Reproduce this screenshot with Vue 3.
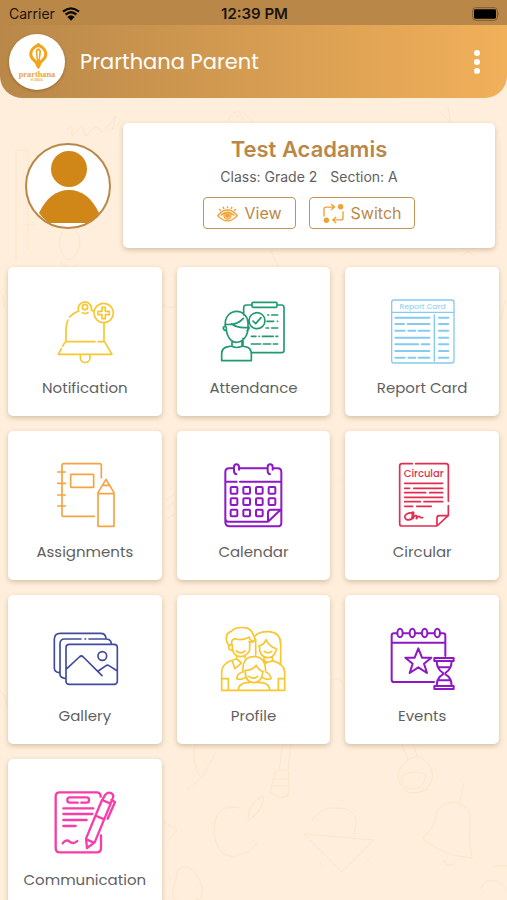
<template>
  <div class="app">
    <!-- Faint school doodles behind everything -->
    <svg class="doodles" viewBox="0 0 507 900" preserveAspectRatio="xMidYMin slice" aria-hidden="true">
      <path v-for="(d, i) in doodles" :key="i" :d="d" />
    </svg>

    <!-- Phone status bar -->
    <div class="status-bar">
      <div class="carrier">
        <span>Carrier</span>
        <svg class="wifi" viewBox="0 0 54 42" aria-hidden="true">
          <path d="M3 14Q27 -6 51 14" />
          <path d="M11 23Q27 9 43 23" />
          <path class="wifi-dot" d="M16 30Q27 20 38 30L27 41Z" />
        </svg>
      </div>
      <span class="time">12:39 PM</span>
      <svg class="battery" viewBox="0 0 84 42" aria-hidden="true">
        <rect class="battery-case" x="2" y="2" width="74" height="38" rx="9" />
        <rect x="6" y="7" width="66" height="28" rx="4" />
        <path class="battery-tip" d="M79 15q5 6 0 12z" />
      </svg>
    </div>

    <!-- Header with logo and menu -->
    <header class="header">
      <svg class="logo" viewBox="28 102 168 168" role="img" aria-label="Prarthana School">
        <path
          class="logo-mark"
          d="M116 128C121 134 143 141 143 162C143 182 125 184 122 200L116 207L110 200C107 184 89 182 89 162C89 141 111 134 116 128Z"
        />
        <path class="logo-hole" d="M116 141C127 145 134 153 134 162C134 171 127 176 120 182H112C105 176 98 171 98 162C98 153 105 145 116 141Z" />
        <path class="logo-mark" d="M116 145q8 2 8 11l-4 30h-8l-4-30q0-9 8-11z" />
        <path class="logo-hole" d="M116 151q3 1 3 5l-2 22h-2l-2-22q0-4 3-5z" />
        <text class="logo-name" x="112" y="230">prarthana</text>
        <text class="logo-sub" x="112" y="242">SCHOOL</text>
      </svg>
      <h1>Prarthana Parent</h1>
      <button class="menu-btn" type="button" aria-label="Menu">
        <svg viewBox="0 0 24 24" aria-hidden="true">
          <circle cx="12" cy="3" r="3" />
          <circle cx="12" cy="12" r="3" />
          <circle cx="12" cy="21" r="3" />
        </svg>
      </button>
    </header>

    <main class="content">
      <!-- Selected student -->
      <section class="student">
        <svg class="avatar" viewBox="0 0 86 86" aria-hidden="true">
          <circle class="avatar-ring" cx="43" cy="43" r="42" />
          <circle cx="44" cy="26" r="18" />
          <path d="M14 70Q25 47 44 47T74 70Q66 80 62 80H25Q20 78 14 70Z" />
        </svg>
        <div class="student-card">
          <h2>{{ student.name }}</h2>
          <p class="student-info">
            <span>Class: {{ student.grade }}</span>
            <span>Section: {{ student.section }}</span>
          </p>
          <div class="student-actions">
            <button class="outline-btn" type="button">
              <svg viewBox="0 0 60 60" aria-hidden="true">
                <path d="M2 36Q15 20 30 20T58 36Q45 51 30 51T2 36Z" />
                <path d="M10 36Q20 27 30 27T50 36" />
                <circle cx="30" cy="36" r="10" />
                <circle class="filled" cx="30" cy="36" r="5" />
                <path d="M30 9v6M17 11l3 6M43 11l-3 6M6 17l5 5M54 17l-5 5" />
              </svg>
              View
            </button>
            <button class="outline-btn" type="button">
              <svg viewBox="0 0 62 62" aria-hidden="true">
                <path d="M3 40V18Q3 12 9 12H33M24 3l10 9-10 9" />
                <path d="M59 24V44Q59 50 53 50H30M39 41l-10 9 10 9" />
                <circle class="filled" cx="52" cy="11" r="6" />
                <circle class="filled" cx="10" cy="51" r="6" />
              </svg>
              Switch
            </button>
          </div>
        </div>
      </section>

      <!-- Main menu tiles -->
      <nav class="tiles">
        <a v-for="tile in tiles" :key="tile.label" class="tile" href="#">
          <svg class="tile-icon" :class="tile.color" :viewBox="tile.viewBox" aria-hidden="true">
            <path :d="tile.path" />
            <path v-if="tile.bold" class="bold" :d="tile.bold" />
            <text v-if="tile.text" :class="tile.text.style" :x="tile.text.x" :y="tile.text.y">
              {{ tile.text.value }}
            </text>
          </svg>
          <span>{{ tile.label }}</span>
        </a>
      </nav>
    </main>
  </div>
</template>

<script setup>
import { ref } from 'vue';

const student = ref({ name: 'Test Acadamis', grade: 'Grade 2', section: 'A' });

// Small rounded square used for the days of the calendar
const day = (x, y) => `M${x + 3} ${y}h14q3 0 3 3v14q0 3-3 3h-14q-3 0-3-3v-14q0-3 3-3z`;

const days = [141, 175, 209]
  .flatMap((y) => [95, 133, 171, 209].map((x) => [x, y]))
  .filter(([x, y]) => !(x === 209 && y === 209))
  .map(([x, y]) => day(x, y))
  .join('');

// Binder ring on top of the events page
const rings = [570, 607, 644, 682]
  .map((x) => `M${x - 8} 99a8 13 0 1 0 16 0a8 13 0 1 0-16 0z`)
  .join('');

const tiles = [
  {
    label: 'Notification',
    color: 'yellow',
    viewBox: '159 117 192 192',
    path:
      'M247 141a8 8 0 1 0 16 0a8 8 0 1 0-16 0zM236 153a20 20 0 1 1 38-2L282 154M247 158q8 5 17 0' +
      'M236 153Q218 160 209 171M204 180Q198 192 198 208V243M312 190V243M197 245H285M294 245H313' +
      'M195 247L188 258M184 266L175 283H336L315 247M241 285v8a14 14 0 0 0 29 0v-8' +
      'M282 159a29 29 0 1 0 58 0a29 29 0 1 0-58 0z' +
      'M306 142h10v12h12v10h-12v12h-10v-12h-12v-10h12z',
  },
  {
    label: 'Attendance',
    color: 'green',
    viewBox: '156 117 192 192',
    path:
      'M224 165V143q0-8 8-8h15M327 135h11q7 0 7 8v128q0 7-7 7H250M252 127h69q3 0 3 3v9q0 3-3 3h-69q-3 0-3-3v-9q0-3 3-3z' +
      'M240 182a24 24 0 1 0 48 0a24 24 0 1 0-48 0zM252 183l8 8 16-18' +
      'M296 165h3M308 165h18M294 184h20M325 184h1M291 204h8M308 204h18' +
      'M247 229h14M270 229h1M280 229h33M321 229h5M247 252h28M283 252h22M313 252h13' +
      'M169 199v-10a34 35 0 0 1 68 0v10M172 203c0 26 14 44 31 44s34-18 34-44' +
      'M168 193q36 4 55-18M188 192q20 14 49 10M170 199q-8 0-7 6t9 7M237 199q4 1 3 6t-6 7' +
      'M189 244v15q13 7 30 0v-15M158 302v-20q0-20 20-22l11-2M219 258l10 2q18 3 18 22v20H158' +
      'M222 235v22',
  },
  {
    label: 'Report Card',
    color: 'sky',
    viewBox: '159 117 192 192',
    path:
      'M171 120H344q7 0 7 7V302q0 7-7 7H171q-7 0-7-7V127q0-7 7-7zM164 157H351M292 164V303',
    bold:
      'M175 173H277M175 192H201M212 192H277M175 212H203M214 212H235M245 212H277M175 233H277' +
      'M175 253H243M254 253H277M175 273H277M175 293H203M214 293H235M245 293H277' +
      'M306 173H334M306 192H334M306 212H334M306 233H334M306 253H334M306 273H334M306 293H334',
    text: { value: 'Report Card', x: 257, y: 147, style: 'report-text' },
  },
  {
    label: 'Assignments',
    color: 'orange',
    viewBox: '159 114 192 192',
    path:
      'M304 159V121q0-5-5-5H191q-5 0-5 5V269q0 5 5 5H283M173 141h23M173 175h23M173 210h23M173 243h23' +
      'M214 148H279q2 0 2 2V185q0 2-2 2H214q-2 0-2-2V150q0-2 2-2z' +
      'M294 304V203L318 163L342 203V304ZM294 206H342M308 181H328',
  },
  {
    label: 'Calendar',
    color: 'purple',
    viewBox: '66 69 192 192',
    path:
      'M102 85H90q-11 0-11 11V246q0 13 13 13H236q11 0 11-11V96q0-11-11-11H222M121 85H202' +
      'M112 103q-7-2-7-10v-12a7 8 0 0 1 15 0v8M213 103q-7-2-7-10v-12a7 8 0 0 1 15 0v8' +
      'M79 125H113M123 125H247M79 236q0 9 9 9H207L247 207M207 245V218q0-9 9-9H247' +
      days,
  },
  {
    label: 'Circular',
    color: 'red',
    viewBox: '570 69 192 192',
    path:
      'M637 71H606q-7 0-7 7V251q0 7 7 7H711L745 226V197M745 184V78q0-7-7-7H647M711 258V234q0-7 7-7H745' +
      'M614 130H728M614 145H629M641 145H728M614 158H677M689 158H728M614 172H728M614 185H661M672 185H728' +
      'M614 199H638M650 199H694' +
      'M637 219C625 217 612 224 615 233C618 242 636 243 637 230V217Q643 215 640 224L638 236Q646 224 649 227T649 236Q657 226 659 230T668 233',
    text: { value: 'Circular', x: 671, y: 110, style: 'circular-text' },
  },
  {
    label: 'Gallery',
    color: 'blue',
    viewBox: '159 111 192 192',
    path:
      'M177 248q-14-2-14-14V148q0-18 18-18H302q14 0 16 14M194 265q-14-2-14-12V162q0-15 14-15H243M255 147h2M267 147H318q14 0 16 13' +
      'M208 163H342q10 0 10 10V273q0 10-10 10H208q-10 0-10-10V173q0-10 10-10z' +
      'M198 238L238 201q6-6 12 0L306 257M295 243L318 227q5-3 9 0L352 243' +
      'M294 198a13 13 0 1 0 26 0a13 13 0 1 0-26 0z',
  },
  {
    label: 'Profile',
    color: 'yellow',
    viewBox: '36 81 192 192',
    path:
      'M62 137Q50 128 52 110Q54 98 66 95Q78 80 105 83Q126 84 132 103Q138 112 138 120Q132 130 120 125' +
      'M70 134V145Q72 168 95 170Q115 168 122 150V127M68 134Q66 116 80 116Q96 124 121 111Q120 120 132 124' +
      'M68 134q-12 2-8 12 4 7 12 4M82 153q13 11 26 0M83 167v10l14 12M108 167v6' +
      'M83 177Q40 186 38 215V271H227V215Q225 192 190 182M70 184l8 22 18-16' +
      'M138 108Q150 94 180 95Q215 98 215 132V190M140 118V166M152 140v10q4 22 24 23t27-26q-22-6-32-28-6 16-22 19' +
      'M166 154q11 9 22 0M165 172v10q12 8 25 0v-12M165 184l8 6' +
      'M102 216q-4-45 32-46t36 46M108 212q2 36 26 36t28-34q-12-2-20-18-12 14-34 16' +
      'M120 229q13 11 26 0M101 216q-16 4-18 20 14 5 26-3M170 216q13 4 16 20-14 5-25-3' +
      'M88 270q0-18 24-22h8M182 270q0-18-24-22h-10M38 236H58V270M227 236H208V270',
  },
  {
    label: 'Events',
    color: 'purple',
    viewBox: '540 81 192 192',
    path:
      'M560 100H552q-7 0-7 7V239q0 7 7 7H672M706 168V107q0-7-7-7H692M580 100H597M617 100H634M654 100H671M545 128H706' +
      'M625 145L636 173H664L642 191L651 219L625 202L599 219L608 191L586 173H614Z' +
      'M673 174H731V183H673ZM673 258H731V267H673Z' +
      'M680 183q0 24 19 36v4q-19 10-19 35M725 183q0 24-19 36v4q19 10 19 35M684 202H721M682 241H723' +
      rings,
  },
  {
    label: 'Communication',
    color: 'pink',
    viewBox: '159 123 192 192',
    path:
      'M302 140q0-13-12-13H179q-12 0-12 12V294q0 13 12 13H290q13 0 13-13V256' +
      'M233 158H209q-7 0-7-7v-2q0-7 7-7H260q7 0 7 7v2q0 7-7 7H244' +
      'M190 175H280M190 192H277M190 210H260M190 228H227M188 280q10-14 21-5t23-2' +
      'M258 266L306 150L332 161L284 277L261 294ZM289 198L313 208M259 268L280 277' +
      'M308 148l8-14q8-10 18-4t3 18l-5 12M334 150l11 6-22 50',
  },
];

const doodles = [
  // torch and potion
  'M283 744l-4 26M291 744l-3 26M275 772q8-4 14 0l-1 24q-8 4-18-4zM274 779h13M273 786h14',
  'M402 744l6 16M413 744l5 14M408 760q-14 10-8 24t26 6q12-14 2-26t-20-4M402 775q16-6 24 0-2 14-14 14t-10-14',
  'M195 744q-4 20 6 34l-14 12M202 778l14-26',
  // apple
  'M240 808Q214 802 214 832Q216 854 232 857Q250 854 258 842M248 820q0-18 16-24-2 18-16 24',
  // slice of watermelon
  'M304 834l70 6-32 32zM312 822q6-16 28-14t14 26M320 862l2 4M366 858l4 4',
  // bell
  'M422 838q12-8 14-22t20-14q16 4 14 22t2 34q-30-2-50-20zM460 802l4-20M444 860q4 10 12 2',
  // pears and leaves at the sides
  'M178 870q10-8 18 4t6 20-18 8-10-16zM480 890q6-14 18-8t9 10M492 866h15M163 822l14 8-10 12',
  // scribbles around the student card
  'M66 130q8-6 6 2t6-2q6-6 6 2t8-2q6-6 8 0t8-4l8-10-4 14 10-10M228 122q4-14 14-9t10 10M236 118q4-6 8 2',
  'M16 260V150h12v100M62 232q-6 14 2 24t14-6-6-22M22 225h14M440 112l10 10-2-16M500 140v90',
  'M60 262q8 10 18 2M270 250q6 10 8 16M462 256q6-8 12 0M0 292q5 6 4 16M505 300l-4 20',
  'M166 500l9-6M165 510l11-10M165 520l10-6M0 690q6 6 7 16M333 680q6-4 10 4M334 480h9M163 305q5 4 12 2',
];
</script>

<style>
body {
  margin: 0;
  background-color: #feeedb;
}
</style>

<style scoped>
.app {
  position: relative;
  display: flex;
  flex-direction: column;
  height: 100vh;
  overflow: hidden;
  background-color: #feeedb;
  font-family: "Poppins", "Inter", "Liberation Sans", sans-serif;
  color: #5f5f5f;
}

h1,
h2,
p {
  margin: 0;
}

.doodles {
  position: absolute;
  top: 0;
  left: 0;
  width: 100%;
  height: 100%;
  fill: none;
  stroke: #fae6ca;
  stroke-width: 1;
}

/* Status bar */
.status-bar {
  position: relative;
  display: grid;
  grid-template-columns: 1fr auto 1fr;
  align-items: center;
  height: 25px;
  padding: 2px 7px 0 9px;
  box-sizing: border-box;
  background-color: #b98849;
  color: #1a1410;
  font-family: "Inter", sans-serif;
  font-size: 14px;
}

.carrier {
  display: flex;
  align-items: center;
  gap: 7px;
}

.wifi {
  width: 18px;
  height: 14px;
  fill: none;
  stroke: #0c0805;
  stroke-width: 7;
}

.wifi-dot {
  fill: #0c0805;
  stroke: none;
}

.time {
  font-size: 15px;
  font-weight: 600;
}

.battery {
  justify-self: end;
  width: 28px;
  height: 14px;
}

.battery-case {
  fill: none;
  stroke: #7d5c31;
  stroke-width: 3;
}

.battery-tip {
  fill: #7d5c31;
}

/* Header */
.header {
  position: relative;
  display: flex;
  align-items: center;
  gap: 15px;
  padding: 9px 18px 8px 9px;
  border-radius: 0 0 22px 22px;
  background: linear-gradient(to right, #b98849, #f1b05a);
}

.logo {
  width: 56px;
  height: 56px;
  border-radius: 50%;
  background-color: white;
  box-shadow: 0 1px 3px rgba(90, 55, 10, 0.4);
}

.logo-mark {
  fill: #f2a41c;
}

.logo-hole {
  fill: white;
}

.logo-name,
.logo-sub {
  fill: #f0a63a;
  font-family: "Liberation Serif", serif;
  font-weight: bold;
  font-size: 25px;
  text-anchor: middle;
}

.logo-sub {
  font-size: 9px;
}

.header h1 {
  flex: 1;
  color: white;
  font-size: 21px;
  line-height: 30px;
  font-weight: 400;
}

.menu-btn {
  width: 24px;
  height: 24px;
  padding: 0;
  border: none;
  background: none;
  cursor: pointer;
}

.menu-btn svg {
  display: block;
  width: 24px;
  height: 24px;
  fill: white;
}

/* Scrolling area */
.content {
  position: relative;
  flex: 1;
  min-height: 0;
  overflow-y: auto;
  scrollbar-width: none;
}

.student {
  display: flex;
  align-items: center;
  gap: 12px;
  padding: 25px 12px 19px 25px;
}

.avatar {
  flex: none;
  width: 86px;
  height: 86px;
  fill: #d08718;
}

.avatar-ring {
  fill: white;
  stroke: #b98849;
  stroke-width: 2;
}

.student-card {
  flex: 1;
  padding: 12px 0 19px;
  border-radius: 5px;
  background-color: white;
  box-shadow: 0 2px 5px rgba(120, 90, 50, 0.3);
  font-family: "Inter", sans-serif;
  text-align: center;
}

.student-card h2 {
  color: #b98849;
  font-size: 22px;
  line-height: 28px;
  font-weight: 600;
}

.student-info {
  display: flex;
  justify-content: center;
  gap: 13px;
  font-size: 14px;
  line-height: 28px;
}

.student-actions {
  display: flex;
  justify-content: center;
  gap: 13px;
  margin-top: 6px;
}

.outline-btn {
  display: flex;
  align-items: center;
  gap: 7px;
  height: 32px;
  padding: 0 13px;
  border: 1px solid #c09459;
  border-radius: 4px;
  background-color: white;
  color: #b98849;
  font-family: inherit;
  font-size: 16px;
  cursor: pointer;
}

.outline-btn svg {
  width: 21px;
  height: 21px;
  fill: none;
  stroke: #f0a232;
  stroke-width: 4;
}

.outline-btn .filled {
  fill: #f0a232;
}

/* Tiles */
.tiles {
  display: grid;
  grid-template-columns: repeat(3, 1fr);
  gap: 15px;
  padding: 0 8px 15px;
}

.tile {
  display: flex;
  flex-direction: column;
  align-items: center;
  gap: 13px;
  padding: 32px 0 16px;
  border-radius: 5px;
  background-color: white;
  box-shadow: 0 2px 5px rgba(120, 90, 50, 0.3);
  color: #5f5f5f;
  font-size: 15px;
  line-height: 24px;
  text-decoration: none;
}

.tile-icon {
  width: 64px;
  height: 64px;
  overflow: visible;
  fill: none;
  stroke: currentColor;
  stroke-width: 5;
  stroke-linecap: round;
  stroke-linejoin: round;
}

.tile-icon .bold {
  stroke-width: 6;
}

.tile-icon text {
  fill: currentColor;
  stroke: none;
  text-anchor: middle;
}

.report-text {
  font-size: 23px;
}

.circular-text {
  font-size: 30px;
  font-weight: 500;
}

.tile-icon.yellow {
  color: #f8c630;
}

.tile-icon.green {
  color: #229a70;
}

.tile-icon.sky {
  color: #85cbef;
  stroke-width: 4;
}

.tile-icon.orange {
  color: #f5a343;
}

.tile-icon.purple {
  color: #8d18c4;
  stroke-width: 6;
}

.tile-icon.red {
  color: #e22c50;
}

.tile-icon.blue {
  color: #414b9e;
}

.tile-icon.pink {
  color: #f73da8;
  stroke-width: 7;
}
</style>
